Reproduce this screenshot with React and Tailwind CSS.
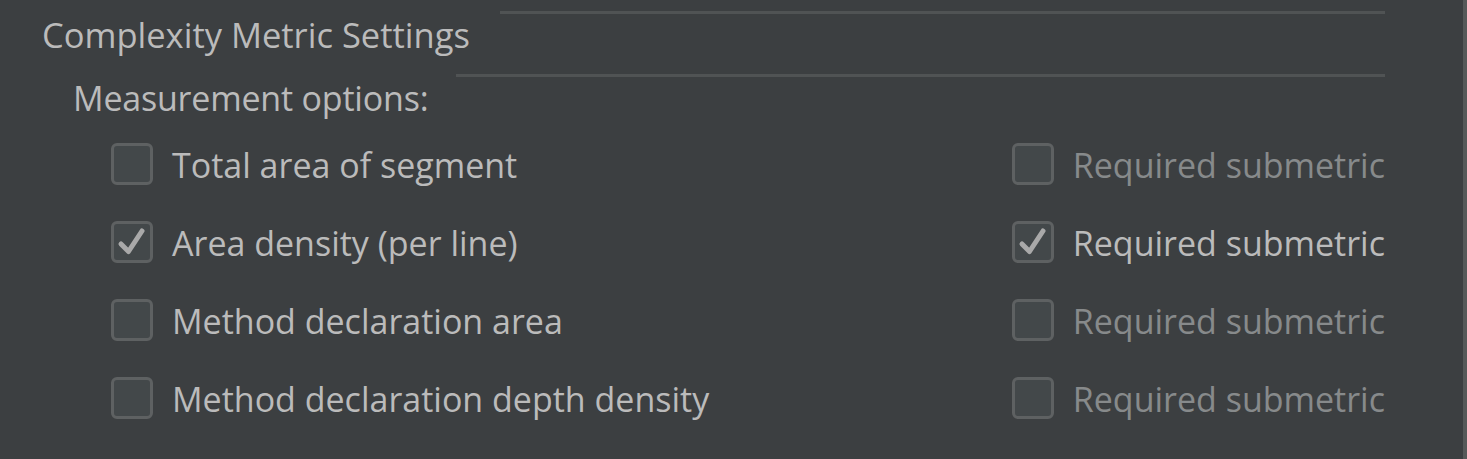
import React from "react";

const rows = [
  { label: "Total area of segment", checked: false, required: false },
  { label: "Area density (per line)", checked: true, required: true },
  { label: "Method declaration area", checked: false, required: false },
  { label: "Method declaration depth density", checked: false, required: false },
];

function CheckBox({ checked }) {
  return (
    <span className="w-[42px] h-[42px] shrink-0 rounded-[6px] border-[3px] border-[#5e6162] bg-[#43484a] flex items-center justify-center">
      {checked && (
        <svg width="42" height="42" viewBox="0 0 42 42" className="-m-[3px]">
          <path d="M10 23 L17.5 30.5 L31 10" fill="none" stroke="#a9a9a9" strokeWidth="5" strokeLinecap="round" strokeLinejoin="round" />
        </svg>
      )}
    </span>
  );
}

export default function App() {
  return (
    <div className="w-[1467px] h-[459px] bg-[#3c3f41] border-r-4 border-[#565959] overflow-hidden text-[#bbbbbb] text-[34px] font-['Open_Sans',sans-serif]">
      <div className="pl-[42px] pr-[78px]">
        <div className="h-[74px] flex items-start">
          <span className="leading-[70px] whitespace-nowrap text-[34.5px]">Complexity Metric Settings</span>
          <div className="flex-1 ml-[30px] mt-[11px] h-[3px] bg-[#505354]"></div>
        </div>
        <div className="ml-[414px] h-[3px] bg-[#505354]"></div>
        <div className="pl-[31px] h-[42px] leading-[42px] tracking-[-0.2px]">Measurement options:</div>
        <div className="mt-[6px] pl-[69px]">
          {rows.map((r, i) => (
            <div key={i} className="h-[78px] flex items-center">
              <div className="flex items-center gap-[19px] w-[904px]">
                <CheckBox checked={r.checked} />
                <span className="whitespace-nowrap pt-[3px]">{r.label}</span>
              </div>
              <div className="flex items-center gap-[19px]">
                <CheckBox checked={r.required} />
                <span className={"whitespace-nowrap pt-[3px] " + (r.required ? "text-[#bbbbbb]" : "text-[#878a8b]")}>Required submetric</span>
              </div>
            </div>
          ))}
        </div>
      </div>
    </div>
  );
}
